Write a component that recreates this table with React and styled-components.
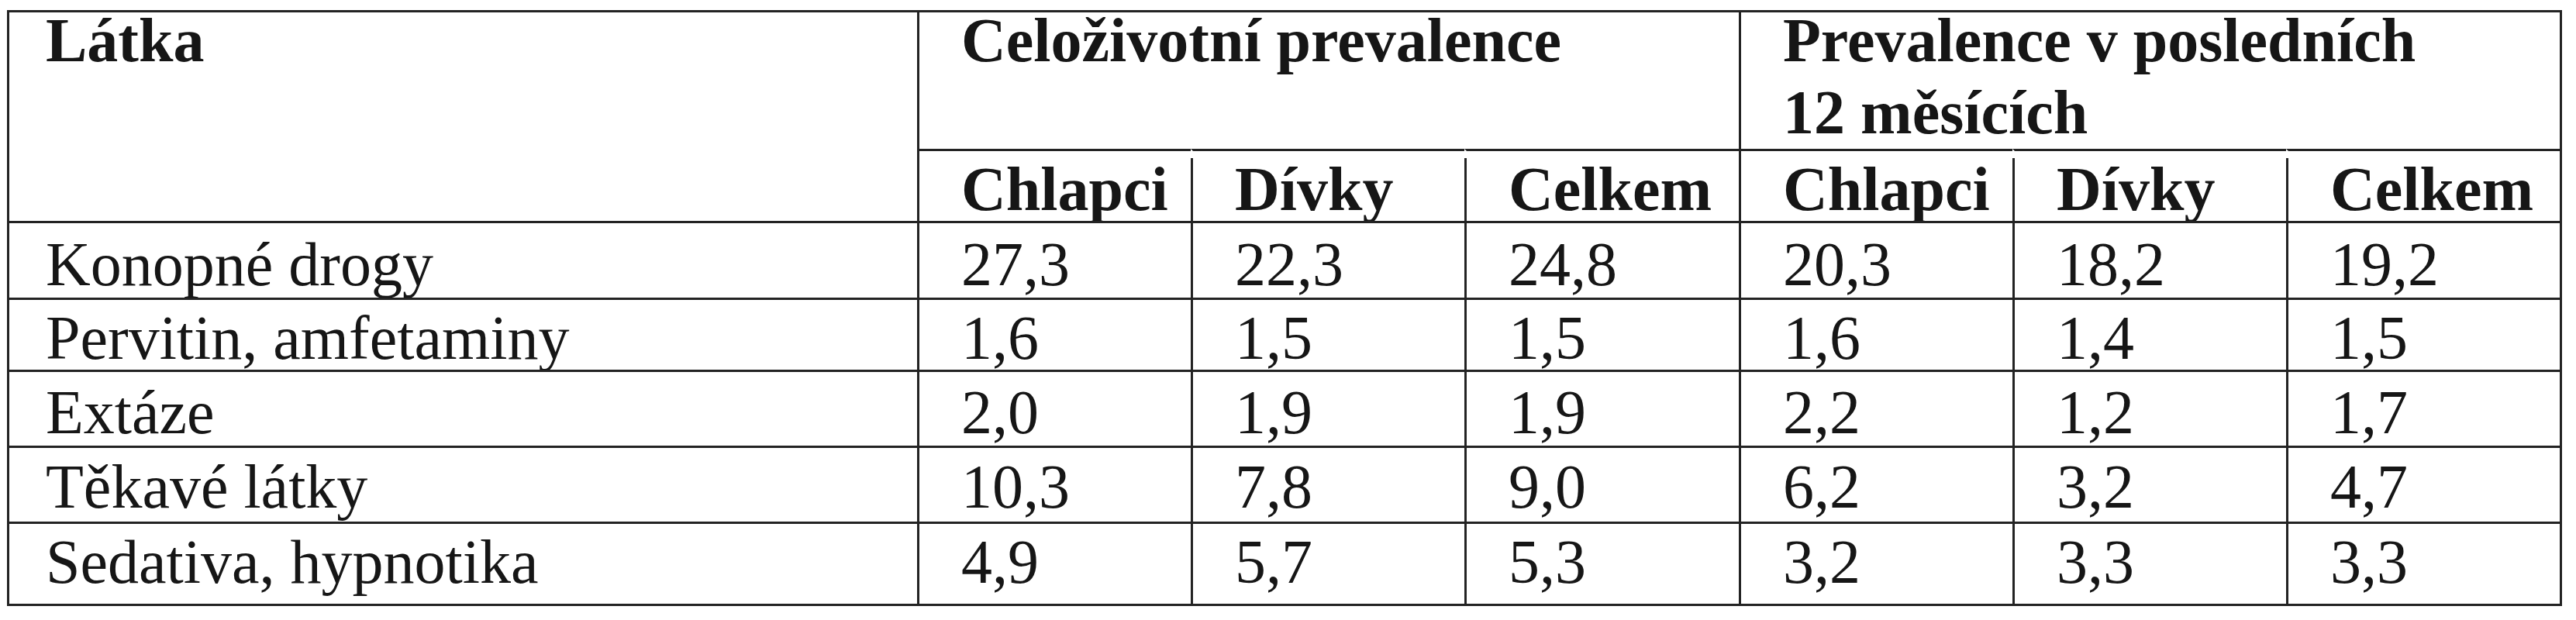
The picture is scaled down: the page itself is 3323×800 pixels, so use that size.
import React from "react";
import styled, { createGlobalStyle } from "styled-components";

const GlobalStyle = createGlobalStyle`
  html, body {
    margin: 0;
    padding: 0;
    background: #ffffff;
  }
`;

const line = "#232323";

const Page = styled.div`
  padding: 13px 0 0 9px;
  font-family: "Liberation Serif", serif;
  color: #161616;
`;

const Table = styled.div`
  display: grid;
  grid-template-columns: 1174px 353px 353px 354px 353px 353px 353px;
  grid-template-rows: 179px 93px ${props => props.$rows};
  width: max-content;
  border-right: 3px solid ${line};
  border-bottom: 3px solid ${line};
  font-family: "Liberation Serif", serif;
`;

const Cell = styled.div`
  position: relative;
  box-sizing: border-box;
  border-top: 3px solid ${line};
  border-left: 3px solid ${props => (props.$gap ? "transparent" : line)};
  padding-top: ${props => props.$pad}px;
  padding-left: ${props => (props.$first ? 47 : 54)}px;
  grid-column: ${props => props.$col || "auto"};
  grid-row: ${props => props.$row || "auto"};
  font-family: "Liberation Serif", serif;
  font-size: 80px;
  line-height: 93px;
  font-weight: ${props => (props.$bold ? 700 : 400)};
  white-space: nowrap;

  &::before {
    content: "";
    display: ${props => (props.$gap ? "block" : "none")};
    position: absolute;
    left: -3px;
    top: 9px;
    bottom: 0;
    width: 3px;
    background: ${line};
  }

  &::after {
    content: "";
    display: ${props => (props.$tick ? "block" : "none")};
    position: absolute;
    left: -3px;
    bottom: -8px;
    width: 3px;
    height: 8px;
    background: ${line};
  }
`;

const Title = styled.div`
  margin-top: -10px;
`;

const groups = [
  { title: ["Celoživotní prevalence"], col: "2 / span 3" },
  { title: ["Prevalence v posledních", "12 měsících"], col: "5 / span 3" },
];

const subHeads = ["Chlapci", "Dívky", "Celkem", "Chlapci", "Dívky", "Celkem"];

const rows = [
  { name: "Konopné drogy", values: ["27,3", "22,3", "24,8", "20,3", "18,2", "19,2"], h: 99, pad: 7 },
  { name: "Pervitin, amfetaminy", values: ["1,6", "1,5", "1,5", "1,6", "1,4", "1,5"], h: 93, pad: 3 },
  { name: "Extáze", values: ["2,0", "1,9", "1,9", "2,2", "1,2", "1,7"], h: 98, pad: 6 },
  { name: "Těkavé látky", values: ["10,3", "7,8", "9,0", "6,2", "3,2", "4,7"], h: 98, pad: 4 },
  { name: "Sedativa, hypnotika", values: ["4,9", "5,7", "5,3", "3,2", "3,3", "3,3"], h: 106, pad: 3 },
];

const App = () => {
  const rowHeights = rows.map(r => `${r.h}px`).join(" ");
  const last = rows.length - 1;
  return (
    <>
      <GlobalStyle />
      <Page>
        <Table $rows={rowHeights}>
          <Cell $first $bold $pad={0} $row="1 / span 2" $col="1">
            <Title>Látka</Title>
          </Cell>
          {groups.map(g => (
            <Cell key={g.col} $bold $pad={0} $col={g.col} $row="1">
              <Title>
                {g.title.map(t => (
                  <div key={t}>{t}</div>
                ))}
              </Title>
            </Cell>
          ))}
          {subHeads.map((s, i) => (
            <Cell key={i} $bold $pad={3} $row="2" $gap={i % 3 !== 0}>
              {s}
            </Cell>
          ))}
          {rows.map((r, ri) => (
            <React.Fragment key={r.name}>
              <Cell $first $pad={r.pad}>
                {r.name}
              </Cell>
              {r.values.map((v, vi) => (
                <Cell key={vi} $pad={r.pad} $tick={ri === last}>
                  {v}
                </Cell>
              ))}
            </React.Fragment>
          ))}
        </Table>
      </Page>
    </>
  );
};

export default App;
